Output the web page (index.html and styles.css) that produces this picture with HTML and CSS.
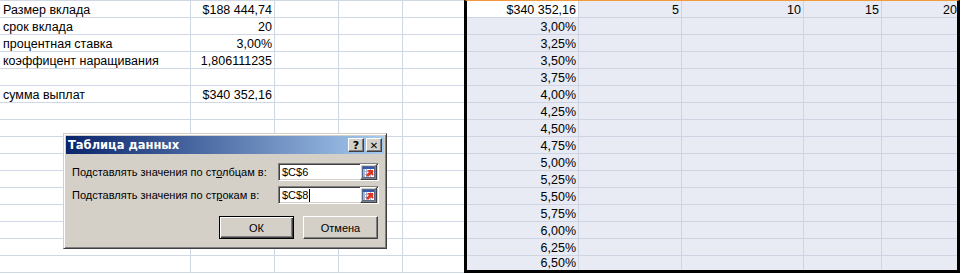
FILE: index.html
```html
<!DOCTYPE html>
<html lang="ru">
<head>
    <meta charset="UTF-8">
    <title>Таблица данных</title>
    <link rel="stylesheet" href="styles.css">
</head>
<body>
<div class="sheet">

    <div class="grid left">
        <div class="c">Размер вклада</div><div class="c num">$188 444,74</div><div class="c"></div><div class="c"></div><div class="c"></div>
        <div class="c">срок вклада</div><div class="c num">20</div><div class="c"></div><div class="c"></div><div class="c"></div>
        <div class="c">процентная ставка</div><div class="c num">3,00%</div><div class="c"></div><div class="c"></div><div class="c"></div>
        <div class="c">коэффицент наращивания</div><div class="c num">1,806111235</div><div class="c"></div><div class="c"></div><div class="c"></div>
        <div class="c"></div><div class="c"></div><div class="c"></div><div class="c"></div><div class="c"></div>
        <div class="c">сумма выплат</div><div class="c num">$340 352,16</div><div class="c"></div><div class="c"></div><div class="c"></div>
        <div class="c"></div><div class="c"></div><div class="c"></div><div class="c"></div><div class="c"></div>
        <div class="c"></div><div class="c"></div><div class="c"></div><div class="c"></div><div class="c"></div>
        <div class="c"></div><div class="c"></div><div class="c"></div><div class="c"></div><div class="c"></div>
        <div class="c"></div><div class="c"></div><div class="c"></div><div class="c"></div><div class="c"></div>
        <div class="c"></div><div class="c"></div><div class="c"></div><div class="c"></div><div class="c"></div>
        <div class="c"></div><div class="c"></div><div class="c"></div><div class="c"></div><div class="c"></div>
        <div class="c"></div><div class="c"></div><div class="c"></div><div class="c"></div><div class="c"></div>
        <div class="c"></div><div class="c"></div><div class="c"></div><div class="c"></div><div class="c"></div>
        <div class="c"></div><div class="c"></div><div class="c"></div><div class="c"></div><div class="c"></div>
        <div class="c"></div><div class="c"></div><div class="c"></div><div class="c"></div><div class="c"></div>
    </div>

    <!-- selected data table range -->
    <div class="grid sel">
        <div class="c num active">$340 352,16</div><div class="c num">5</div><div class="c num">10</div><div class="c num">15</div><div class="c num last">20</div>
        <div class="c num">3,00%</div><div class="c"></div><div class="c"></div><div class="c"></div><div class="c"></div>
        <div class="c num">3,25%</div><div class="c"></div><div class="c"></div><div class="c"></div><div class="c"></div>
        <div class="c num">3,50%</div><div class="c"></div><div class="c"></div><div class="c"></div><div class="c"></div>
        <div class="c num">3,75%</div><div class="c"></div><div class="c"></div><div class="c"></div><div class="c"></div>
        <div class="c num">4,00%</div><div class="c"></div><div class="c"></div><div class="c"></div><div class="c"></div>
        <div class="c num">4,25%</div><div class="c"></div><div class="c"></div><div class="c"></div><div class="c"></div>
        <div class="c num">4,50%</div><div class="c"></div><div class="c"></div><div class="c"></div><div class="c"></div>
        <div class="c num">4,75%</div><div class="c"></div><div class="c"></div><div class="c"></div><div class="c"></div>
        <div class="c num">5,00%</div><div class="c"></div><div class="c"></div><div class="c"></div><div class="c"></div>
        <div class="c num">5,25%</div><div class="c"></div><div class="c"></div><div class="c"></div><div class="c"></div>
        <div class="c num">5,50%</div><div class="c"></div><div class="c"></div><div class="c"></div><div class="c"></div>
        <div class="c num">5,75%</div><div class="c"></div><div class="c"></div><div class="c"></div><div class="c"></div>
        <div class="c num">6,00%</div><div class="c"></div><div class="c"></div><div class="c"></div><div class="c"></div>
        <div class="c num">6,25%</div><div class="c"></div><div class="c"></div><div class="c"></div><div class="c"></div>
        <div class="c num">6,50%</div><div class="c"></div><div class="c"></div><div class="c"></div><div class="c"></div>
    </div>

    <div class="dialog">
        <div class="titlebar">
            <span class="title">Таблица данных</span>
            <button class="cap-btn help">?</button>
            <button class="cap-btn close">✕</button>
        </div>

        <div class="dialog-body">
            <div class="field">
                <label>Подставлять значения по ст<u>о</u>лбцам в:</label>
                <div class="input">
                    <span class="value">$C$6</span>
                    <span class="ref-btn">
                        <svg width="13" height="12" viewBox="0 0 13 12">
                            <rect x="0.5" y="0.5" width="12" height="11" fill="#fff" stroke="#58688c"/>
                            <rect x="1" y="1" width="11" height="2" fill="#3659b0"/>
                            <rect x="1" y="3" width="2" height="8" fill="#9fb3dc"/>
                            <path d="M1 5.5h11M1 8.5h11M4.5 3v8M8.5 3v8" stroke="#a7b0c6"/>
                            <path d="M5 4h6v6l-2-2-3 3-2-2 3-3z" fill="#e2331c"/>
                        </svg>
                    </span>
                </div>
            </div>
            <div class="field">
                <label>Подставлять значения по ст<u>р</u>окам в:</label>
                <div class="input">
                    <span class="value">$C$8</span><span class="caret"></span>
                    <span class="ref-btn">
                        <svg width="13" height="12" viewBox="0 0 13 12">
                            <rect x="0.5" y="0.5" width="12" height="11" fill="#fff" stroke="#58688c"/>
                            <rect x="1" y="1" width="11" height="2" fill="#3659b0"/>
                            <rect x="1" y="3" width="2" height="8" fill="#9fb3dc"/>
                            <path d="M1 5.5h11M1 8.5h11M4.5 3v8M8.5 3v8" stroke="#a7b0c6"/>
                            <path d="M5 4h6v6l-2-2-3 3-2-2 3-3z" fill="#e2331c"/>
                        </svg>
                    </span>
                </div>
            </div>

            <div class="buttons">
                <button class="btn default">ОК</button>
                <button class="btn">Отмена</button>
            </div>
        </div>
    </div>

</div>
</body>
</html>
```

FILE: styles.css
```css
* {
    box-sizing: border-box;
}

body {
    margin: 0;
    width: 961px;
    height: 274px;
    overflow: hidden;
    background: #fff;
    font-family: "Liberation Sans", Arial, sans-serif;
}

.sheet {
    display: flex;
    align-items: flex-start;
    position: relative;
}

.grid {
    display: grid;
    font-size: 12.5px;
    color: #000;
}

.left {
    grid-template-columns: 191px 84px 64px 64px 61px;
    grid-auto-rows: 17px;
    border-top: 1px solid #d0d7e5;
}

.c {
    border-right: 1px solid #d0d7e5;
    border-bottom: 1px solid #d0d7e5;
    padding: 2px 2px 0 3px;
    line-height: 14px;
    white-space: nowrap;
    overflow: hidden;
}

.num {
    text-align: right;
}

.left .c:nth-child(5n) {
    border-right: none;
}

.sel {
    grid-template-columns: 112px 103px 122px 78px 75px;
    grid-template-rows: repeat(15, 17px) 14px;
    background: #e8eaf4;
    border-top: 1px solid #f29a3c;
    border-left: 3px solid #000;
    border-right: 3px solid #000;
    border-bottom: 3px solid #000;
}

.sel .c {
    border-color: #cfd4e2;
}

.sel .c:nth-child(5n) {
    border-right: none;
}

.sel .c:nth-last-child(-n+5) {
    border-bottom: none;
    padding-top: 0;
}

.sel .active {
    background: #fff;
}

.sel .last {
    padding-right: 0;
}

/* dialog window, classic style */
.dialog {
    position: absolute;
    left: 63px;
    top: 133px;
    width: 324px;
    height: 116px;
    background: #d4d0c8;
    border: 1px solid;
    border-color: #d4d0c8 #404040 #404040 #d4d0c8;
    box-shadow: inset 1px 1px #fff, inset -1px -1px #808080;
    padding: 2px;
    font-family: "Liberation Sans", Arial, sans-serif;
    font-size: 11px;
    color: #000;
}

.titlebar {
    height: 18px;
    display: flex;
    align-items: center;
    padding: 0 2px 0 2px;
    background: linear-gradient(to right, #0a246a, #a6caf0);
}

.title {
    flex: 1;
    color: #fff;
    font-family: "DejaVu Sans", sans-serif;
    font-weight: bold;
    font-size: 11.5px;
}

.cap-btn {
    width: 16px;
    height: 14px;
    padding: 0;
    margin: 0;
    background: #d4d0c8;
    border: 1px solid;
    border-color: #fff #404040 #404040 #fff;
    box-shadow: inset -1px -1px #808080;
    font-family: "DejaVu Sans", sans-serif;
    font-weight: bold;
    font-size: 11px;
    line-height: 11px;
    color: #000;
}

.close {
    margin-left: 2px;
    font-size: 10px;
}

.dialog-body {
    padding: 9px 5px 0 6px;
    display: flex;
    flex-direction: column;
    gap: 5px;
}

.field {
    display: flex;
    align-items: center;
}

.field label {
    flex: 1;
}

.input {
    width: 101px;
    height: 18px;
    display: flex;
    align-items: center;
    background: #fff;
    border: 1px solid;
    border-color: #808080 #fff #fff #808080;
    box-shadow: inset 1px 1px #404040, inset -1px -1px #d4d0c8;
    padding: 0 0 0 2px;
    font-size: 11px;
}

.value {
    padding-left: 1px;
}

.caret {
    width: 1px;
    height: 13px;
    background: #000;
    margin-left: 1px;
}

.ref-btn {
    margin-left: auto;
    margin-right: 1px;
    width: 17px;
    height: 16px;
    display: flex;
    align-items: center;
    justify-content: center;
    background: #d4d0c8;
    border: 1px solid;
    border-color: #fff #404040 #404040 #fff;
    box-shadow: inset -1px -1px #808080;
}

.buttons {
    display: flex;
    justify-content: flex-end;
    gap: 9px;
    margin-top: 7px;
    padding-right: 1px;
}

.btn {
    width: 75px;
    height: 23px;
    padding: 0;
    background: #d4d0c8;
    border: 1px solid;
    border-color: #fff #404040 #404040 #fff;
    box-shadow: inset -1px -1px #808080;
    font-family: "Liberation Sans", Arial, sans-serif;
    font-size: 11px;
    color: #000;
}

.btn.default {
    border: 1px solid #000;
    box-shadow: inset 1px 1px #fff, inset -1px -1px #404040, inset -2px -2px #808080;
}
```
